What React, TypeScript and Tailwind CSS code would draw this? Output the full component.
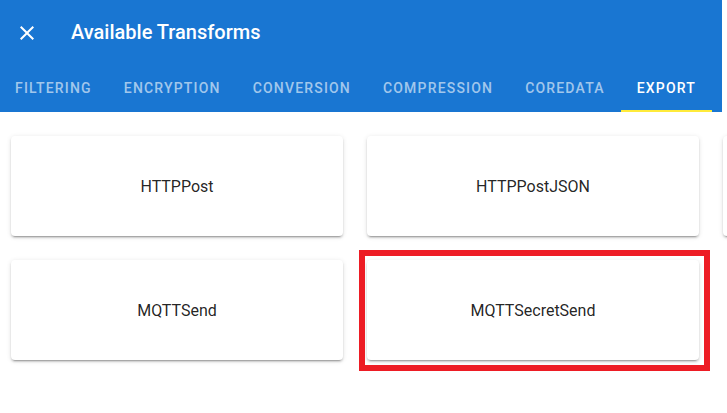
import React from "react";

const tabs = ["Filtering", "Encryption", "Conversion", "Compression", "CoreData", "Export"];

function Card({ label, children }: { label: string; children?: React.ReactNode }) {
  return (
    <div className="relative">
      <div className="flex h-[100px] w-[332px] items-center justify-center rounded bg-white pt-[2px] text-base text-black/[0.87] shadow-[0px_3px_1px_-2px_rgba(0,0,0,0.2),0px_2px_2px_0px_rgba(0,0,0,0.14),0px_1px_5px_0px_rgba(0,0,0,0.12)]">
        {label}
      </div>
      {children}
    </div>
  );
}

export default function App() {
  return (
    <div
      className="relative h-[413px] w-[727px] overflow-hidden bg-white"
      style={{ fontFamily: "Roboto, 'Liberation Sans', sans-serif" }}
    >
      <header className="w-[722px] bg-[#1976d2] text-white">
        <div className="flex h-16 items-center pl-[15px]">
          <svg width="24" height="24" viewBox="0 0 24 24" fill="currentColor" className="mt-[2px]">
            <path d="M19 6.41 17.59 5 12 10.59 6.41 5 5 6.41 10.59 12 5 17.59 6.41 19 12 13.41 17.59 19 19 17.59 13.41 12z" />
          </svg>
          <h1 className="ml-8 text-xl font-medium tracking-[0px]">Available Transforms</h1>
        </div>
        <nav className="flex h-12 -ml-px overflow-hidden">
          {tabs.map((t) => {
            const active = t === "Export";
            return (
              <div
                key={t}
                className={
                  "relative flex h-12 shrink-0 items-center px-4 text-sm font-medium uppercase tracking-[1.18px] " +
                  (active ? "text-white" : "text-white/60")
                }
              >
                {t}
                {active && <span className="absolute bottom-0 left-0 right-0 h-[2px] bg-[#ffeb3b]" />}
              </div>
            );
          })}
        </nav>
      </header>
      <main className="grid grid-cols-[332px_332px_332px] gap-6 pl-[11px] pt-6">
        <Card label="HTTPPost" />
        <Card label="HTTPPostJSON" />
        <Card label="" />
        <Card label="MQTTSend" />
        <Card label="MQTTSecretSend">
          <div className="pointer-events-none absolute -left-2 -top-[10px] h-[121px] w-[351px] border-[6px] border-[#ed1c24]" />
        </Card>
      </main>
    </div>
  );
}
